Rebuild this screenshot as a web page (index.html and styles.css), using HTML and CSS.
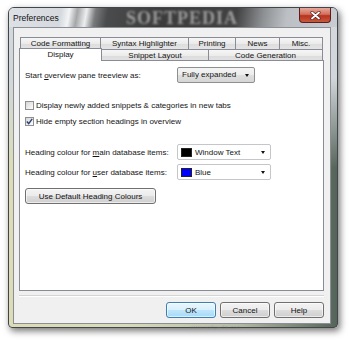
FILE: index.html
```html
<!DOCTYPE html>
<html>
<head>
<title>Preferences</title>
<link rel="stylesheet" href="styles.css">
</head>
<body>
<div class="window">
    <div class="titlebar">
        <span class="title">Preferences</span>
        <span class="watermark">SOFTPEDIA</span>
        <span class="close">
            <svg width="11" height="9" viewBox="0 0 11 9"><path d="M2 1.5 L9 7.5 M9 1.5 L2 7.5" stroke="#5a2020" stroke-width="3.2" stroke-linecap="round"/><path d="M2 1.5 L9 7.5 M9 1.5 L2 7.5" stroke="#fff" stroke-width="1.8" stroke-linecap="round"/></svg>
        </span>
    </div>
    <div class="client">
        <div class="tabs">
            <div class="tabrow back">
                <span class="tab w-code">Code Formatting</span>
                <span class="tab w-syntax">Syntax Highlighter</span>
                <span class="tab w-print">Printing</span>
                <span class="tab w-news">News</span>
                <span class="tab w-misc">Misc.</span>
            </div>
            <div class="tabrow front">
                <span class="tab sel w-display">Display</span>
                <span class="tab w-snippet">Snippet Layout</span>
                <span class="tab w-gen">Code Generation</span>
            </div>
        </div>
        <div class="panel">
            <div class="row">
                <label class="lbl">Start <u>o</u>verview pane treeview as:</label>
                <div class="dropdown">Fully expanded<i class="arrow"></i></div>
            </div>
            <div class="check first">
                <span class="box"></span>
                <span>Display newly added snippets &amp; categories in new tabs</span>
            </div>
            <div class="check">
                <span class="box">
                    <svg width="7" height="7" viewBox="0 0 7 7"><path d="M0.8 3.6 L2.7 5.6 L6.2 0.8" fill="none" stroke="#2a3f73" stroke-width="1.4"/></svg>
                </span>
                <span>Hide empty section headings in overview</span>
            </div>
            <div class="row colour first">
                <label class="lbl">Heading colour for <u>m</u>ain database items:</label>
                <div class="combo"><span class="swatch black"></span>Window Text<i class="arrow"></i></div>
            </div>
            <div class="row colour">
                <label class="lbl">Heading colour for <u>u</u>ser database items:</label>
                <div class="combo"><span class="swatch blue"></span>Blue<i class="arrow"></i></div>
            </div>
            <button class="btn wide" type="button">Use Default Heading Colours</button>
        </div>
        <div class="sep"></div>
        <div class="buttons">
            <button class="btn default" type="button">OK</button>
            <button class="btn" type="button">Cancel</button>
            <button class="btn" type="button">Help</button>
        </div>
    </div>
</div>
<div class="footmark">www.softpedia.com</div>
</body>
</html>
```

FILE: styles.css
```css
html, body
{
    margin: 0;
    background: #fff;
}
body
{
    font-family: "Liberation Sans", Arial, sans-serif;
    font-size: 8px;
    color: #141414;
    position: relative;
    height: 343px;
    overflow: hidden;
}
.window
{
    margin: 7px 0 0 8px;
    width: 330px;
    height: 321px;
    box-sizing: border-box;
    border: 1px solid #41464b;
    border-radius: 6px 6px 4px 4px;
    box-shadow: 2px 3px 7px rgba(0,0,0,.55);
    display: flex;
    flex-direction: column;
    background:
        linear-gradient(180deg, #d5d9dd 0, #d2d6da 70px, rgba(210,214,218,0) 160px),
        linear-gradient(90deg, #dcdcb6 0, #d9dbbb 35%, #b4baa3 70%, #55645a 100%);
}
.titlebar
{
    position: relative;
    height: 19px;
    display: flex;
    align-items: center;
    padding-left: 4px;
    border-radius: 5px 5px 0 0;
    background: linear-gradient(100deg, #dde1e5 0, #d6dade 52px, #f2f4f6 60px, #a4a6a8 68px, #eceef0 77px, #77797b 86px, #4a4b4c 98px, #3b3b3b 150px, #424242 225px, #8e9194 252px, #bcc0c4 275px, #c9cdd1 100%);
}
.title
{
    font-size: 8.5px;
    color: #111;
    position: relative;
    z-index: 1;
}
.watermark
{
    position: absolute;
    left: 117px;
    top: 0;
    height: 19px;
    line-height: 20px;
    font-family: "Liberation Serif", serif;
    font-weight: bold;
    font-size: 18px;
    letter-spacing: 1px;
    color: rgba(215,215,215,.6);
    filter: blur(1px);
}
.close
{
    margin-left: auto;
    margin-right: 6px;
    align-self: flex-start;
    width: 32px;
    height: 15px;
    box-sizing: border-box;
    border: 1px solid #5b1e1e;
    border-top: none;
    border-radius: 0 0 4px 4px;
    background: linear-gradient(180deg, #e8a89a 0, #d3705e 45%, #b8321e 55%, #c85a3c 100%);
    display: flex;
    align-items: center;
    justify-content: center;
    position: relative;
    z-index: 1;
}
.client
{
    flex: 1;
    margin: 0 6px 3px 4px;
    border: 1px solid #8a8f96;
    background: #f0f0f0;
    padding: 9px 6px 0 5px;
    display: flex;
    flex-direction: column;
    position: relative;
    z-index: 1;
}
.tabrow
{
    display: flex;
    height: 12px;
}
.tabrow.back
{
    margin-left: 1px;
}
.tab
{
    box-sizing: border-box;
    border: 1px solid #898c95;
    border-bottom: none;
    margin-left: -1px;
    background: linear-gradient(180deg, #f6f6f6 0, #ebebeb 50%, #dcdcdc 51%, #e4e4e4 100%);
    text-align: center;
    line-height: 11px;
    white-space: nowrap;
}
.tab:first-child
{
    margin-left: 0;
}
.tabrow.front .tab
{
    height: 13px;
}
.tab.sel
{
    position: relative;
    z-index: 2;
    background: #fff;
    margin-top: -1px;
    height: 15px;
    line-height: 11px;
}
.w-code { width: 81px; }
.w-syntax { width: 89px; }
.w-print { width: 48px; }
.w-news { width: 45px; }
.w-misc { width: 44px; }
.w-display { width: 83px; }
.w-snippet { width: 108px; }
.w-gen { width: 115px; }
.panel
{
    position: relative;
    z-index: 1;
    margin-top: -1px;
    height: 231px;
    box-sizing: border-box;
    border: 1px solid #898c95;
    background: #fff;
    padding: 6px 5px;
    display: flex;
    flex-direction: column;
    align-items: flex-start;
}
.row
{
    display: flex;
    align-items: center;
}
.lbl
{
    width: 152px;
    white-space: nowrap;
}
.dropdown
{
    position: relative;
    width: 78px;
    height: 16px;
    box-sizing: border-box;
    border: 1px solid #8e8f8f;
    border-radius: 2px;
    background: linear-gradient(180deg, #f4f4f4 0, #ececec 50%, #dedede 51%, #d6d6d6 100%);
    padding-left: 4px;
    line-height: 14px;
}
.arrow
{
    position: absolute;
    right: 5px;
    top: 6px;
    border-left: 2.5px solid transparent;
    border-right: 2.5px solid transparent;
    border-top: 3px solid #111;
}
.check
{
    display: flex;
    align-items: center;
    height: 13px;
    margin-top: 3px;
    white-space: nowrap;
}
.check.first
{
    margin-top: 16px;
}
.box
{
    width: 9px;
    height: 9px;
    box-sizing: border-box;
    border: 1px solid #8f8f8f;
    background: linear-gradient(135deg, #d6d6d6 0, #f2f2f2 70%, #fff 100%);
    margin-right: 2px;
    display: flex;
    align-items: center;
    justify-content: center;
}
.colour
{
    margin-top: 4px;
}
.colour.first
{
    margin-top: 16px;
}
.combo
{
    position: relative;
    width: 94px;
    height: 16px;
    box-sizing: border-box;
    border: 1px solid #c4c6ca;
    border-radius: 2px;
    background: #fff;
    display: flex;
    align-items: center;
    padding-left: 3px;
}
.swatch
{
    width: 11px;
    height: 9px;
    box-sizing: border-box;
    border: 1px solid #222;
    margin-right: 3px;
}
.swatch.black { background: #000; }
.swatch.blue { background: #0000ff; }
.btn
{
    font: inherit;
    color: #141414;
    height: 16px;
    padding: 0;
    border: 1px solid #707070;
    border-radius: 3px;
    background: linear-gradient(180deg, #f3f3f3 0, #ebebeb 50%, #dddddd 51%, #cfcfcf 100%);
    box-shadow: inset 0 0 0 1px rgba(255,255,255,.6);
}
.btn.wide
{
    width: 131px;
    margin-top: 8px;
}
.sep
{
    margin-top: 4px;
    height: 1px;
    background: #d5d5d5;
    border-bottom: 1px solid #fff;
}
.buttons
{
    display: flex;
    justify-content: flex-end;
    gap: 4px;
    margin-top: 5px;
}
.buttons .btn
{
    width: 50px;
}
.btn.default
{
    border-color: #3c7fb1;
    background: linear-gradient(180deg, #eaf6fd 0, #d9f0fc 50%, #bee6fd 51%, #a7d9f5 100%);
}
.footmark
{
    position: absolute;
    left: 190px;
    top: 324px;
    font-size: 6px;
    color: rgba(120,120,120,.35);
}
```
